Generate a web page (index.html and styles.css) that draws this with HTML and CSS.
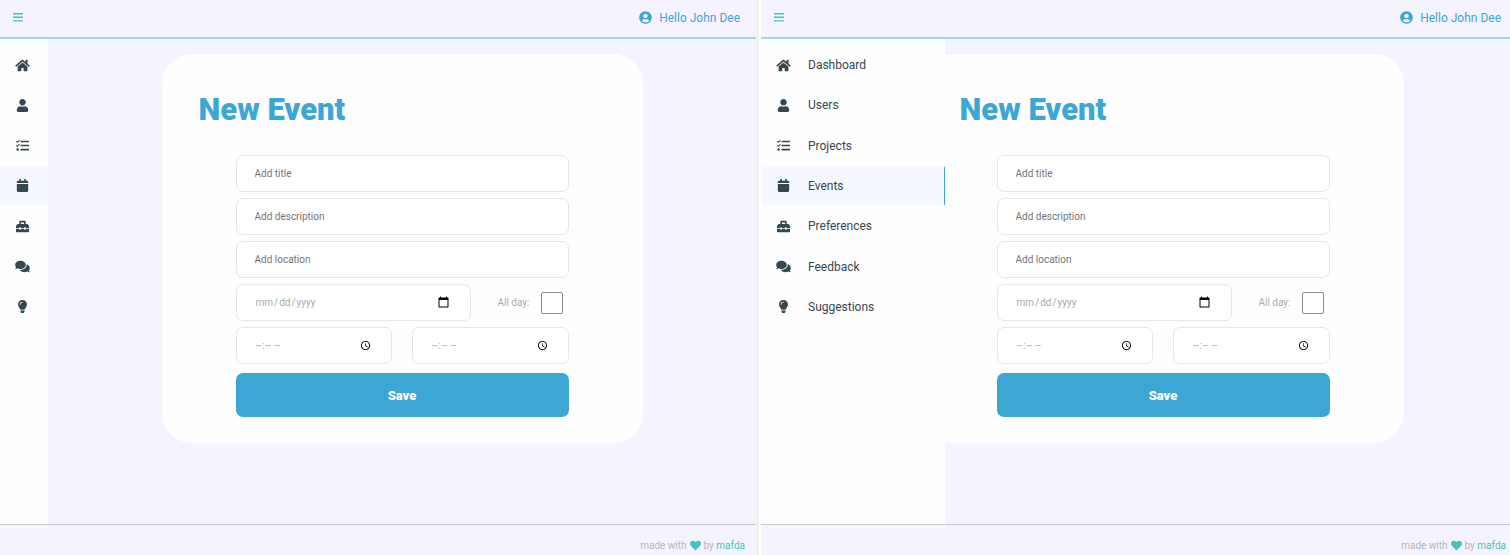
FILE: index.html
```html
<!DOCTYPE html>
<html lang="en">
<head>
<meta charset="utf-8">
<title>New Event</title>
<link rel="stylesheet" href="styles.css">
</head>
<body>
<svg class="sprite" aria-hidden="true">
  <symbol id="bars" viewBox="0 0 10 9"><path d="M0 0h10v1.4H0zM0 3.6h10V5H0zM0 7.2h10v1.4H0z"/></symbol>
  <symbol id="home" viewBox="0 0 576 512"><path d="M280.37 148.26L96 300.11V464a16 16 0 0 0 16 16l112.06-.29a16 16 0 0 0 15.92-16V368a16 16 0 0 1 16-16h64a16 16 0 0 1 16 16v95.64a16 16 0 0 0 16 16.05L464 480a16 16 0 0 0 16-16V300L295.67 148.26a12.19 12.19 0 0 0-15.3 0zM571.6 251.47L488 182.56V44.05a12 12 0 0 0-12-12h-56a12 12 0 0 0-12 12v72.61L318.47 43a48 48 0 0 0-61 0L4.34 251.47a12 12 0 0 0-1.6 16.9l25.5 31A12 12 0 0 0 45.15 301l235.22-193.74a12.19 12.19 0 0 1 15.3 0L530.9 301a12 12 0 0 0 16.9-1.6l25.5-31a12 12 0 0 0-1.7-16.93z"/></symbol>
  <symbol id="user" viewBox="0 0 448 512"><path d="M224 256c70.7 0 128-57.3 128-128S294.7 0 224 0 96 57.3 96 128s57.3 128 128 128zm89.6 32h-16.7c-22.2 10.2-46.9 16-72.9 16s-50.6-5.8-72.9-16h-16.7C60.2 288 0 348.2 0 422.4V464c0 26.5 21.5 48 48 48h352c26.5 0 48-21.5 48-48v-41.6c0-74.2-60.2-134.4-134.4-134.4z"/></symbol>
  <symbol id="tasks" viewBox="0 0 512 512"><path d="M192 64h304a16 16 0 0 1 16 16v32a16 16 0 0 1-16 16H192a16 16 0 0 1-16-16V80a16 16 0 0 1 16-16zM192 224h304a16 16 0 0 1 16 16v32a16 16 0 0 1-16 16H192a16 16 0 0 1-16-16v-32a16 16 0 0 1 16-16zM192 384h304a16 16 0 0 1 16 16v32a16 16 0 0 1-16 16H192a16 16 0 0 1-16-16v-32a16 16 0 0 1 16-16z"/><circle cx="64" cy="416" r="48"/><path d="M12 88l42 40 80-84M12 248l42 40 80-84" fill="none" stroke="currentColor" stroke-width="42"/></symbol>
  <symbol id="calendar" viewBox="0 0 448 512"><path d="M12 192h424c6.6 0 12 5.4 12 12v260c0 26.5-21.5 48-48 48H48c-26.5 0-48-21.5-48-48V204c0-6.6 5.4-12 12-12zm436-44v-36c0-26.5-21.5-48-48-48h-48V12c0-6.6-5.4-12-12-12h-40c-6.6 0-12 5.4-12 12v52H160V12c0-6.6-5.4-12-12-12h-40c-6.6 0-12 5.4-12 12v52H48C21.5 64 0 85.5 0 112v36c0 6.6 5.4 12 12 12h424c6.6 0 12-5.4 12-12z"/></symbol>
  <symbol id="toolbox" viewBox="0 0 512 512"><path d="M502.63 214.63l-45.25-45.25c-6-6-14.14-9.37-22.63-9.37H384V80c0-26.51-21.49-48-48-48H176c-26.51 0-48 21.49-48 48v80H77.25c-8.49 0-16.62 3.37-22.63 9.37L9.37 214.63c-6 6-9.37 14.14-9.37 22.63V320h128v-16c0-8.84 7.16-16 16-16h32c8.84 0 16 7.16 16 16v16h128v-16c0-8.84 7.16-16 16-16h32c8.84 0 16 7.16 16 16v16h128v-82.75c0-8.48-3.37-16.62-9.37-22.62zM320 160H192V96h128v64zm64 208c0 8.84-7.16 16-16 16h-32c-8.84 0-16-7.16-16-16v-16H192v16c0 8.84-7.16 16-16 16h-32c-8.84 0-16-7.16-16-16v-16H0v96c0 17.67 14.33 32 32 32h448c17.67 0 32-14.33 32-32v-96H384v16z"/></symbol>
  <symbol id="comments" viewBox="0 0 576 512"><path d="M416 192c0-88.4-93.1-160-208-160S0 103.6 0 192c0 34.3 14.1 65.9 38 92-13.4 30.2-35.5 54.2-35.8 54.5-2.2 2.3-2.8 5.7-1.5 8.7S4.8 352 8 352c36.6 0 66.9-12.3 88.7-25 32.2 15.7 70.3 25 111.3 25 114.9 0 208-71.6 208-160zm122 220c23.9-26 38-57.7 38-92 0-66.9-53.5-124.2-129.3-148.1.9 6.6 1.3 13.3 1.3 20.1 0 105.9-107.7 192-240 192-10.8 0-21.3-.8-31.7-1.9C207.8 439.6 281.8 480 368 480c41 0 79.1-9.2 111.3-25 21.8 12.7 52.1 25 88.7 25 3.2 0 6.1-1.9 7.3-4.8 1.3-2.9.7-6.3-1.5-8.7-.3-.3-22.4-24.2-35.8-54.5z"/></symbol>
  <symbol id="bulb" viewBox="0 0 352 512"><path d="M96.06 454.35c.01 6.29 1.87 12.45 5.36 17.69l17.09 25.69a31.99 31.99 0 0 0 26.64 14.28h61.71a31.99 31.99 0 0 0 26.64-14.28l17.09-25.69a31.989 31.989 0 0 0 5.36-17.69l.04-38.35H96.01l.05 38.35zM0 176c0 44.37 16.45 84.85 43.56 115.78 16.52 18.85 42.36 58.23 52.21 91.45.04.26.07.52.11.78h160.24c.04-.26.07-.51.11-.78 9.85-33.22 35.69-72.6 52.21-91.45C335.55 260.85 352 220.37 352 176 352 78.61 272.91-.3 175.45 0 73.44.31 0 82.97 0 176zm176-80c-44.11 0-80 35.89-80 80 0 8.84-7.16 16-16 16s-16-7.16-16-16c0-61.76 50.24-112 112-112 8.84 0 16 7.16 16 16s-7.16 16-16 16z"/></symbol>
  <symbol id="account" viewBox="0 0 496 512"><path d="M248 8C111 8 0 119 0 256s111 248 248 248 248-111 248-248S385 8 248 8zm0 96c48.6 0 88 39.4 88 88s-39.4 88-88 88-88-39.4-88-88 39.4-88 88-88zm0 344c-58.7 0-111.3-26.6-146.5-68.2 18.8-35.4 55.6-59.8 98.5-59.8 2.4 0 4.8.4 7.1 1.1 13 4.2 26.6 6.9 40.9 6.9 14.3 0 28-2.7 40.9-6.9 2.3-.7 4.7-1.1 7.1-1.1 42.9 0 79.7 24.4 98.5 59.8C359.3 421.4 306.7 448 248 448z"/></symbol>
  <symbol id="heart" viewBox="0 0 512 512"><path d="M462.3 62.6C407.5 15.9 326 24.3 275.7 76.2L256 96.5l-19.7-20.3C186.1 24.3 104.5 15.9 49.7 62.6c-62.8 53.6-66.1 149.8-9.9 207.9l193.5 199.8c12.5 12.9 32.8 12.9 45.3 0l193.5-199.8c56.3-58.1 53-154.3-9.8-207.9z"/></symbol>
</svg>
<div class="screens">
  <section class="app">
    <header class="topbar">
      <button class="menu" type="button" aria-label="Open menu"><svg class="menu-icon"><use href="#bars"/></svg></button>
      <a class="account" href="#"><svg class="icon"><use href="#account"/></svg>Hello John Dee</a>
    </header>
    <div class="body">
      <nav class="sidebar" aria-label="Main">
        <ul class="nav">
          <li><a class="nav-link" href="#" aria-label="Dashboard"><svg class="icon"><use href="#home"/></svg></a></li>
          <li><a class="nav-link" href="#" aria-label="Users"><svg class="icon"><use href="#user"/></svg></a></li>
          <li><a class="nav-link" href="#" aria-label="Projects"><svg class="icon"><use href="#tasks"/></svg></a></li>
          <li><a class="nav-link active" href="#" aria-label="Events"><svg class="icon"><use href="#calendar"/></svg></a></li>
          <li><a class="nav-link" href="#" aria-label="Preferences"><svg class="icon"><use href="#toolbox"/></svg></a></li>
          <li><a class="nav-link" href="#" aria-label="Feedback"><svg class="icon"><use href="#comments"/></svg></a></li>
          <li><a class="nav-link" href="#" aria-label="Suggestions"><svg class="icon"><use href="#bulb"/></svg></a></li>
        </ul>
      </nav>
      <main class="content">
        <div class="card">
          <h1 class="title">New Event</h1>
          <form class="form">
            <input class="field" type="text" placeholder="Add title" aria-label="Title">
            <input class="field" type="text" placeholder="Add description" aria-label="Description">
            <input class="field" type="text" placeholder="Add location" aria-label="Location">
            <div class="row">
              <input class="field date" type="date" aria-label="Date">
              <label class="all-day" for="all-day-1">All day:</label>
              <input class="check" type="checkbox" id="all-day-1">
            </div>
            <div class="row times">
              <input class="field time" type="time" aria-label="Start time">
              <input class="field time" type="time" aria-label="End time">
            </div>
            <button class="save" type="button">Save</button>
          </form>
        </div>
      </main>
    </div>
    <footer class="footer"><span>made with</span><svg class="heart"><use href="#heart"/></svg><span>by <a class="author" href="#">mafda</a></span></footer>
  </section>
  <section class="app">
    <header class="topbar">
      <button class="menu" type="button" aria-label="Close menu"><svg class="menu-icon"><use href="#bars"/></svg></button>
      <a class="account" href="#"><svg class="icon"><use href="#account"/></svg>Hello John Dee</a>
    </header>
    <div class="body">
      <nav class="sidebar open" aria-label="Main">
        <ul class="nav">
          <li><a class="nav-link" href="#"><svg class="icon"><use href="#home"/></svg>Dashboard</a></li>
          <li><a class="nav-link" href="#"><svg class="icon"><use href="#user"/></svg>Users</a></li>
          <li><a class="nav-link" href="#"><svg class="icon"><use href="#tasks"/></svg>Projects</a></li>
          <li><a class="nav-link active" href="#"><svg class="icon"><use href="#calendar"/></svg>Events</a></li>
          <li><a class="nav-link" href="#"><svg class="icon"><use href="#toolbox"/></svg>Preferences</a></li>
          <li><a class="nav-link" href="#"><svg class="icon"><use href="#comments"/></svg>Feedback</a></li>
          <li><a class="nav-link" href="#"><svg class="icon"><use href="#bulb"/></svg>Suggestions</a></li>
        </ul>
      </nav>
      <main class="content">
        <div class="card">
          <h1 class="title">New Event</h1>
          <form class="form">
            <input class="field" type="text" placeholder="Add title" aria-label="Title">
            <input class="field" type="text" placeholder="Add description" aria-label="Description">
            <input class="field" type="text" placeholder="Add location" aria-label="Location">
            <div class="row">
              <input class="field date" type="date" aria-label="Date">
              <label class="all-day" for="all-day-2">All day:</label>
              <input class="check" type="checkbox" id="all-day-2">
            </div>
            <div class="row times">
              <input class="field time" type="time" aria-label="Start time">
              <input class="field time" type="time" aria-label="End time">
            </div>
            <button class="save" type="button">Save</button>
          </form>
        </div>
      </main>
    </div>
    <footer class="footer"><span>made with</span><svg class="heart"><use href="#heart"/></svg><span>by <a class="author" href="#">mafda</a></span></footer>
  </section>
</div>
</body>
</html>
```
FILE: styles.css
```css
* { box-sizing: border-box; }

body {
  margin: 0;
  overflow: hidden;
  background: #fff;
  color: #37474f;
  font-family: Roboto, sans-serif;
  font-size: 12px;
}

a { color: inherit; text-decoration: none; }
svg { fill: currentColor; }
.sprite { display: none; }

/* Two copies of the app side by side; the second runs past the window edge. */
.screens {
  display: grid;
  grid-template-columns: 1fr 1fr;
  gap: 2px;
  width: calc(100% + 10px);
  min-height: 100vh;
}

.app {
  display: flex;
  flex-direction: column;
  min-width: 0;
  background: #f5f4fe;
  border-right: 3px solid #f1f1f1;
}

.topbar {
  display: flex;
  align-items: center;
  justify-content: space-between;
  height: 39px;
  padding: 0 16px 2px 13px;
  border-bottom: 2px solid #a3d6ea;
}

.menu {
  display: flex;
  padding: 0;
  border: 0;
  background: none;
  color: #45c1c1;
}
.menu-icon { width: 10px; height: 9px; }

.account {
  display: flex;
  align-items: center;
  gap: 6px;
  color: #3ca7d4;
}

.icon { flex: none; width: 15px; height: 13px; }

.body { position: relative; display: flex; flex: 1; }

.sidebar { width: 48px; padding-top: 7px; background: #fefeff; }
.sidebar.open { position: absolute; top: 0; bottom: 0; left: 0; width: 184px; }
.sidebar.open + .content { margin-left: 48px; }

.nav {
  display: flex;
  flex-direction: column;
  justify-content: space-between;
  height: 280px;
  margin: 0;
  padding: 0;
  list-style: none;
}

.nav-link {
  display: flex;
  align-items: center;
  gap: 17px;
  height: 38px;
  padding-left: 15px;
}
.nav-link.active { background: #f5f8ff; }
.open .active { border-right: 1px solid #3ca7d4; }

.content { flex: 1; padding: 15px 0; }

.card {
  max-width: 481px;
  margin: 0 auto;
  padding: 37px 37px 26px;
  border-radius: 30px;
  background: #fefeff;
}

.title {
  margin: 0 0 27px;
  color: #3ca7d4;
  font-size: 31px;
  font-weight: 900;
  line-height: 37px;
}

.form {
  display: flex;
  flex-direction: column;
  gap: 6px;
  margin: 0 37px;
}

.field {
  width: 100%;
  min-width: 0;
  height: 37px;
  padding: 0 18px;
  border: 1px solid #e6e6ee;
  border-radius: 7px;
  background: #fff;
  color: #aaa;
  font-family: inherit;
  font-size: 10px;
}
.field::placeholder { color: #757575; }

.row { display: flex; align-items: center; }
.times { gap: 20px; }
.date { flex: 1; }
.date::-webkit-calendar-picker-indicator { font-size: 13px; }
.time { padding-right: 16px; }
.time::-webkit-calendar-picker-indicator { font-size: 11px; }

.all-day {
  margin: 0 11px 0 26px;
  color: #aaa;
  font-size: 10px;
}

.check {
  appearance: none;
  width: 22px;
  height: 22px;
  margin: 0 6px 0 0;
  border: 1px solid #8a8a8a;
  border-radius: 2px;
  background: #fff;
}

.save {
  height: 44px;
  margin-top: 3px;
  border: 0;
  border-radius: 7px;
  background: #3ca7d4;
  color: #fff;
  font-family: inherit;
  font-size: 13px;
  font-weight: 900;
}

.footer {
  display: flex;
  align-items: center;
  justify-content: flex-end;
  gap: 3px;
  height: 31px;
  padding: 11px 11px 0 0;
  border-top: 1px solid #c8c8cc;
  color: #b5b5bb;
  font-size: 10px;
}
.heart { width: 11px; height: 11px; color: #45c1c1; }
.author { color: #45c1c1; }
```
